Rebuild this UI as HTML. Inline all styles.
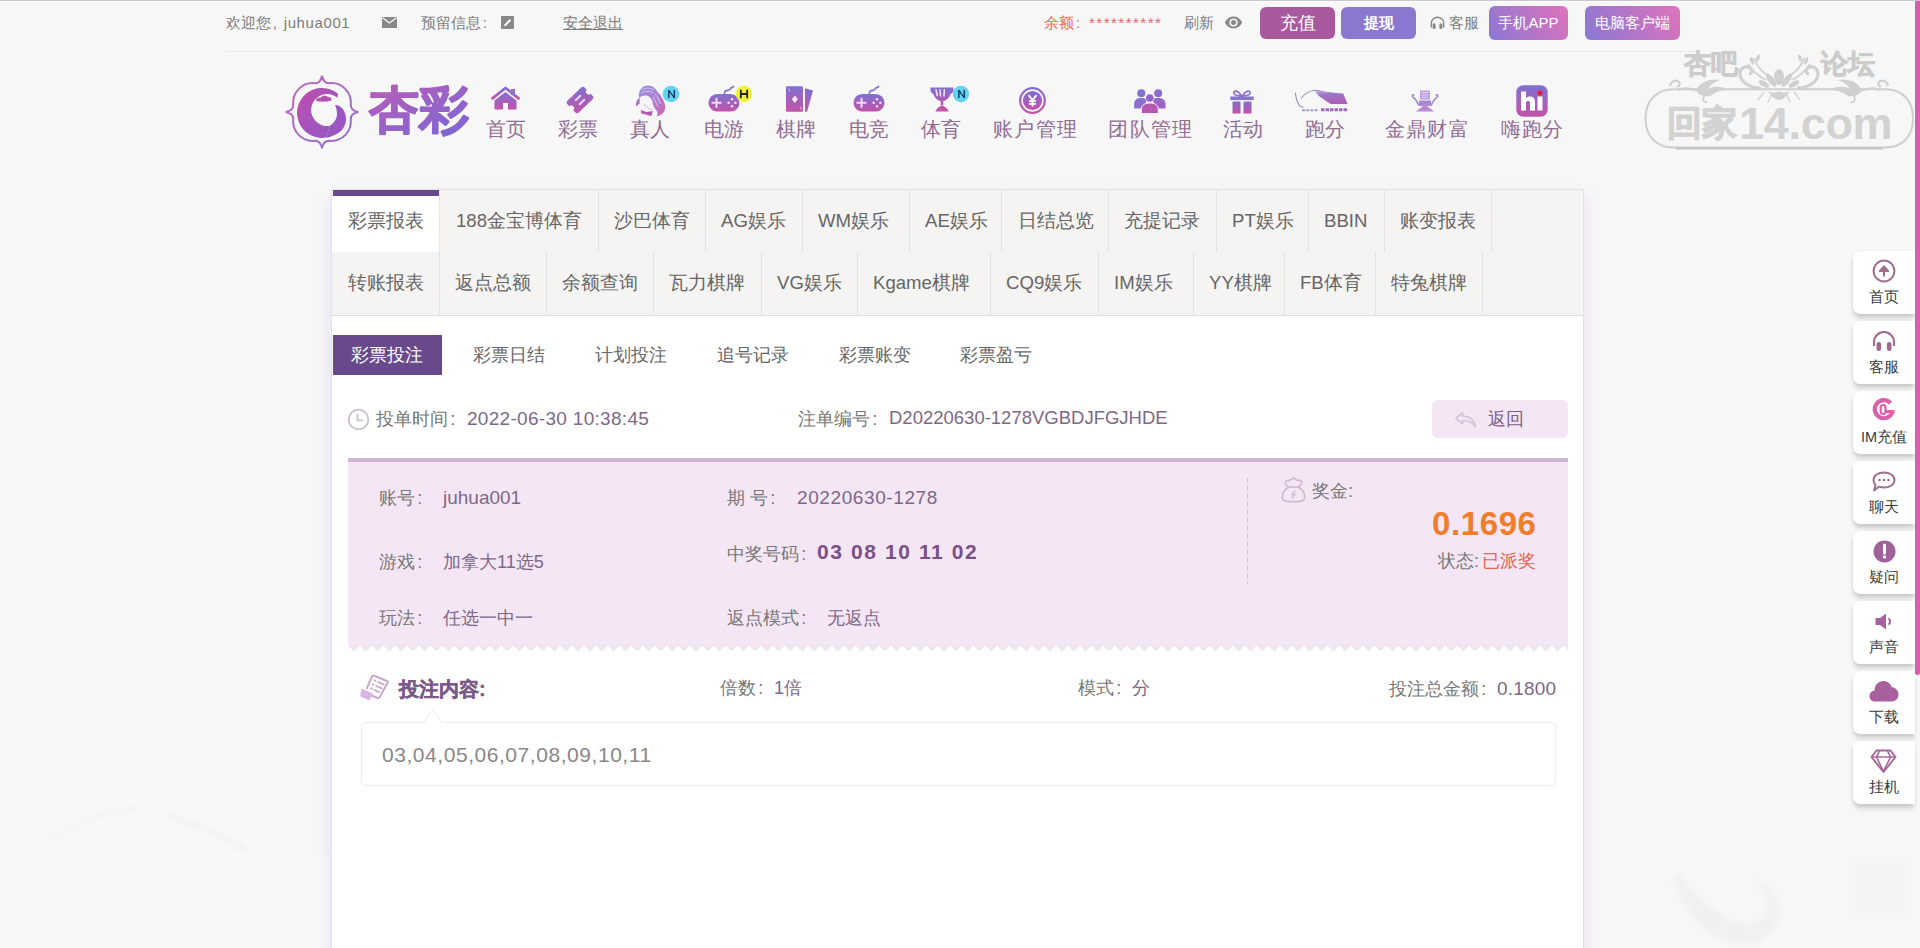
<!DOCTYPE html>
<html><head><meta charset="utf-8">
<style>
*{margin:0;padding:0;box-sizing:border-box}
html,body{width:1920px;height:948px;overflow:hidden}
body{background:#f7f7f7;font-family:"Liberation Sans",sans-serif;position:relative;color:#666}
.a{position:absolute}
.t{position:absolute;white-space:nowrap;line-height:1}
.c{font-style:normal;display:inline-block;width:1em;text-indent:0.12em}
/* top bar */
#topline{left:0;top:0;width:1920px;height:1px;background:#cac8cf;box-shadow:0 1px 0 #fbfbfd}
#hdrline{left:225px;top:51px;width:1470px;height:1px;background:#ebebeb}
.tb{font-size:15px;color:#7c7c7c}
.btn{position:absolute;border-radius:6px;color:#fff;text-align:center}
/* nav */
.nv{font-size:20px;color:#906c93;transform:translateX(-50%)}
/* tabs */
#box{left:331px;top:189px;width:1253px;height:780px;background:#fff;border:1px solid #e2e2e2;box-shadow:0 8px 14px rgba(200,170,230,.35)}
.row{position:absolute;left:332px;width:1251px;background:#f5f4f3}
.sep{position:absolute;width:1px;background:#e4e2e2}
.tab{font-size:18.6px;color:#666}
.sub{font-size:18px;color:#666}
.lbl{font-size:18px;color:#777}
.val{font-size:18px;color:#7d6888}
/* sidebar */
.card{position:absolute;left:1853px;width:62px;height:63px;background:#fff;border-radius:7px 0 0 7px;box-shadow:0 5px 5px -1px rgba(0,0,0,.17),-1px 1px 4px rgba(0,0,0,.05)}
.ct{position:absolute;left:0;width:62px;text-align:center;font-size:14.5px;color:#3a3a3a;top:39px;line-height:1}
.ci{position:absolute;left:20px;top:8px;width:22px;height:22px}
</style></head><body>
<!-- faint bg shapes -->
<svg class="a" style="left:0;top:560px;filter:blur(2.5px)" width="330" height="388" viewBox="0 0 330 388"><path d="M0 388V300C30 260 80 240 140 235C200 232 250 250 300 290L330 300V388Z" fill="#f8f8f8"/><path d="M50 280C80 260 110 250 140 248" stroke="#f3f3f3" stroke-width="4" fill="none"/><path d="M165 255C190 262 215 272 245 290" stroke="#f3f3f3" stroke-width="7" fill="none"/></svg>
<svg class="a" style="left:1660px;top:860px;filter:blur(2.5px)" width="260" height="88" viewBox="0 0 260 88"><path d="M18 12C30 30 50 50 75 62C95 70 110 60 108 42C106 30 98 25 92 22C102 20 116 30 118 48C120 72 100 88 70 82C45 76 25 50 14 22Z" fill="#f0f0f0"/><rect x="196" y="-30" width="50" height="85" fill="#f4f4f4"/></svg>
<div class="a" id="topline"></div>
<div class="a" id="hdrline"></div>

<!-- top bar left -->
<div class="t tb" style="left:226px;top:15px">欢迎您<i class="c" style="width:0.85em">,</i><span style="letter-spacing:0.6px">juhua001</span></div>
<div class="t tb" style="left:421px;top:15px">预留信息<i class="c">:</i></div>
<div class="t tb" style="left:563px;top:15px;text-decoration:underline">安全退出</div>
<!-- top bar right -->
<div class="t tb" style="left:1044px;top:15px;color:#ec6a45">余额<i class="c">:</i></div>
<div class="t tb" style="left:1089px;top:15px;color:#ec6070;letter-spacing:1.5px;font-size:15px">**********</div>
<div class="t tb" style="left:1184px;top:15px">刷新</div>
<div class="btn" style="left:1260px;top:7px;width:75px;height:32px;background:#a8589c;font-size:18px;line-height:32px">充值</div>
<div class="btn" style="left:1341px;top:7px;width:75px;height:32px;background:#8a77d0;font-size:15px;font-weight:bold;line-height:32px">提现</div>
<div class="t tb" style="left:1449px;top:15px;font-size:15px">客服</div>
<div class="btn" style="left:1489px;top:6px;width:79px;height:34px;background:linear-gradient(60deg,#8a78d4,#e072bc);font-size:15px;line-height:34px">手机APP</div>
<div class="btn" style="left:1585px;top:6px;width:95px;height:34px;background:linear-gradient(60deg,#8a78d4,#e072bc);font-size:15px;line-height:34px">电脑客户端</div>

<!-- nav -->
<div class="t nv" style="left:505.6px;top:119px">首页</div>
<div class="t nv" style="left:578.4px;top:119px">彩票</div>
<div class="t nv" style="left:650px;top:119px">真人</div>
<div class="t nv" style="left:723.8px;top:119px">电游</div>
<div class="t nv" style="left:795.5px;top:119px">棋牌</div>
<div class="t nv" style="left:868.5px;top:119px">电竞</div>
<div class="t nv" style="left:940.5px;top:119px">体育</div>
<div class="t nv" style="left:1035px;top:119px;letter-spacing:1.3px;margin-left:0.65px">账户管理</div>
<div class="t nv" style="left:1150.3px;top:119px;letter-spacing:1.3px;margin-left:0.65px">团队管理</div>
<div class="t nv" style="left:1243.2px;top:119px">活动</div>
<div class="t nv" style="left:1325px;top:119px">跑分</div>
<div class="t nv" style="left:1426.8px;top:119px;letter-spacing:1.3px;margin-left:0.65px">金鼎财富</div>
<div class="t nv" style="left:1531.5px;top:119px;letter-spacing:1px;margin-left:0.5px">嗨跑分</div>

<!-- main box -->
<div class="a" id="box"></div>
<div class="row" style="top:190px;height:62px"></div>
<div class="row" style="top:252px;height:63px"></div>
<div class="a" style="left:332px;top:315px;width:1251px;height:1px;background:#dcdcdc"></div>
<div class="a" style="left:332px;top:196px;width:107px;height:56px;background:#fff"></div>
<div class="a" style="left:333px;top:190px;width:106px;height:6px;background:#684a8c"></div>


<!-- tabs row1 -->
<div class="t tab" style="left:348px;top:212px">彩票报表</div>
<div class="t tab" style="left:456px;top:212px">188金宝博体育</div>
<div class="t tab" style="left:614px;top:212px">沙巴体育</div>
<div class="t tab" style="left:721px;top:212px">AG娱乐</div>
<div class="t tab" style="left:818px;top:212px">WM娱乐</div>
<div class="t tab" style="left:925px;top:212px">AE娱乐</div>
<div class="t tab" style="left:1018px;top:212px">日结总览</div>
<div class="t tab" style="left:1124px;top:212px">充提记录</div>
<div class="t tab" style="left:1232px;top:212px">PT娱乐</div>
<div class="t tab" style="left:1324px;top:212px">BBIN</div>
<div class="t tab" style="left:1400px;top:212px">账变报表</div>
<div class="sep" style="left:439px;top:190px;height:62px"></div>
<div class="sep" style="left:598px;top:190px;height:62px"></div>
<div class="sep" style="left:705px;top:190px;height:62px"></div>
<div class="sep" style="left:802px;top:190px;height:62px"></div>
<div class="sep" style="left:909px;top:190px;height:62px"></div>
<div class="sep" style="left:1001px;top:190px;height:62px"></div>
<div class="sep" style="left:1108px;top:190px;height:62px"></div>
<div class="sep" style="left:1216px;top:190px;height:62px"></div>
<div class="sep" style="left:1308px;top:190px;height:62px"></div>
<div class="sep" style="left:1384px;top:190px;height:62px"></div>
<div class="sep" style="left:1491px;top:190px;height:62px"></div>
<!-- tabs row2 -->
<div class="t tab" style="left:348px;top:274px">转账报表</div>
<div class="t tab" style="left:455px;top:274px">返点总额</div>
<div class="t tab" style="left:562px;top:274px">余额查询</div>
<div class="t tab" style="left:669px;top:274px">瓦力棋牌</div>
<div class="t tab" style="left:777px;top:274px">VG娱乐</div>
<div class="t tab" style="left:873px;top:274px">Kgame棋牌</div>
<div class="t tab" style="left:1006px;top:274px">CQ9娱乐</div>
<div class="t tab" style="left:1114px;top:274px">IM娱乐</div>
<div class="t tab" style="left:1209px;top:274px">YY棋牌</div>
<div class="t tab" style="left:1300px;top:274px">FB体育</div>
<div class="t tab" style="left:1391px;top:274px">特兔棋牌</div>
<div class="sep" style="left:439px;top:252px;height:63px"></div>
<div class="sep" style="left:546px;top:252px;height:63px"></div>
<div class="sep" style="left:653px;top:252px;height:63px"></div>
<div class="sep" style="left:761px;top:252px;height:63px"></div>
<div class="sep" style="left:857px;top:252px;height:63px"></div>
<div class="sep" style="left:990px;top:252px;height:63px"></div>
<div class="sep" style="left:1098px;top:252px;height:63px"></div>
<div class="sep" style="left:1193px;top:252px;height:63px"></div>
<div class="sep" style="left:1284px;top:252px;height:63px"></div>
<div class="sep" style="left:1375px;top:252px;height:63px"></div>
<div class="sep" style="left:1482px;top:252px;height:63px"></div>

<!-- sub tabs -->
<div class="a" style="left:333px;top:335px;width:109px;height:40px;background:#684a8c"></div>
<div class="t sub" style="left:351px;top:346px;color:#fff">彩票投注</div>
<div class="t sub" style="left:473px;top:346px">彩票日结</div>
<div class="t sub" style="left:594.5px;top:346px">计划投注</div>
<div class="t sub" style="left:717px;top:346px">追号记录</div>
<div class="t sub" style="left:838.5px;top:346px">彩票账变</div>
<div class="t sub" style="left:960px;top:346px">彩票盈亏</div>

<!-- order line -->
<div class="t lbl" style="left:376px;top:410px">投单时间<i class="c">:</i></div>
<div class="t val" style="left:467px;top:409px;font-size:19px;letter-spacing:0.3px">2022-06-30 10:38:45</div>
<div class="t lbl" style="left:798px;top:410px">注单编号<i class="c">:</i></div>
<div class="t val" style="left:889px;top:409px;font-size:18.5px">D20220630-1278VGBDJFGJHDE</div>
<div class="a" style="left:1432px;top:400px;width:136px;height:38px;border-radius:6px;background:#f5e6f6"></div>
<div class="t val" style="left:1488px;top:410px;color:#7a5e86">返回</div>

<!-- ticket -->
<div class="a" style="left:348px;top:458px;width:1220px;height:4px;background:#cbb6cf"></div>
<div class="a" style="left:348px;top:462px;width:1220px;height:184px;background:#f5e6f6"></div>
<div class="t lbl" style="left:379px;top:489px">账号<i class="c">:</i></div>
<div class="t val" style="left:443px;top:488px;font-size:19px">juhua001</div>
<div class="t lbl" style="left:379px;top:553px">游戏<i class="c">:</i></div>
<div class="t val" style="left:443px;top:553px">加拿大11选5</div>
<div class="t lbl" style="left:379px;top:609px">玩法<i class="c">:</i></div>
<div class="t val" style="left:443px;top:609px">任选一中一</div>
<div class="t lbl" style="left:727px;top:489px">期 号<i class="c">:</i></div>
<div class="t val" style="left:797px;top:488px;font-size:19px;letter-spacing:0.6px">20220630-1278</div>
<div class="t lbl" style="left:727px;top:545px">中奖号码<i class="c">:</i></div>
<div class="t" style="left:817px;top:541px;font-size:21px;font-weight:bold;color:#7a5088;letter-spacing:1.6px">03 08 10 11 02</div>
<div class="t lbl" style="left:727px;top:609px">返点模式<i class="c">:</i></div>
<div class="t val" style="left:827px;top:609px">无返点</div>
<svg class="a" style="left:1247px;top:478px" width="2" height="106"><path d="M0.5 0V106" stroke="#d4c2d6" stroke-width="1" stroke-dasharray="5 3"/></svg>
<div class="t lbl" style="left:1312px;top:482px">奖金:</div>
<div class="t" style="left:1432px;top:507px;font-size:33px;font-weight:bold;color:#f07d2a;letter-spacing:0.6px">0.1696</div>
<div class="t lbl" style="left:1438px;top:552px">状态:<span style="color:#e8654a;margin-left:3px">已派奖</span></div>

<!-- bet content -->
<div class="t" style="left:399px;top:679px;font-size:20px;font-weight:bold;color:#7a5a88;-webkit-text-stroke:0.4px #7a5a88">投注内容:</div>
<div class="t lbl" style="left:720px;top:679px">倍数<i class="c">:</i><span class="val" style="font-size:18px">1倍</span></div>
<div class="t lbl" style="left:1078px;top:679px">模式<i class="c">:</i><span class="val" style="font-size:18px">分</span></div>
<div class="t lbl" style="left:1389px;top:679px">投注总金额<i class="c">:</i><span class="val" style="font-size:19px;letter-spacing:0.2px">0.1800</span></div>
<div class="a" style="left:361px;top:722px;width:1195px;height:64px;border:1px solid #ececec;border-radius:5px;background:#fff"></div>
<div class="t" style="left:382px;top:744px;font-size:21px;color:#888;letter-spacing:0.55px">03,04,05,06,07,08,09,10,11</div>

<!-- sidebar -->
<div class="card" style="top:251px"><div class="ct">首页</div></div>
<div class="card" style="top:321px"><div class="ct">客服</div></div>
<div class="card" style="top:391px"><div class="ct">IM充值</div></div>
<div class="card" style="top:461px"><div class="ct">聊天</div></div>
<div class="card" style="top:531px"><div class="ct">疑问</div></div>
<div class="card" style="top:601px"><div class="ct">声音</div></div>
<div class="card" style="top:671px"><div class="ct">下载</div></div>
<div class="card" style="top:741px"><div class="ct">挂机</div></div>
<div class="a" style="left:1915px;top:1px;width:5px;height:674px;background:#d85fae;border-radius:0 0 2px 2px"></div>


<!-- top icons -->
<svg class="a" style="left:382px;top:17px" width="15" height="11" viewBox="0 0 15 11"><path d="M0 0H15V11H0Z" fill="#888"/><path d="M0.5 0.8L7.5 6L14.5 0.8" stroke="#f7f7f7" stroke-width="1.3" fill="none"/></svg>
<svg class="a" style="left:501px;top:16px" width="13" height="13" viewBox="0 0 13 13"><rect width="13" height="13" rx="1" fill="#888"/><path d="M3.2 10.2L3.6 8.3L8.8 3.1L10.2 4.5L5 9.7Z" fill="#fff"/></svg>
<svg class="a" style="left:1224px;top:16px" width="19" height="13" viewBox="0 0 19 13"><path d="M0.8 6.5C3.5 1.8 6.5 0.6 9.5 0.6S15.5 1.8 18.2 6.5C15.5 11.2 12.5 12.4 9.5 12.4S3.5 11.2 0.8 6.5Z" fill="#888"/><circle cx="9.5" cy="6.5" r="4.1" fill="#f7f7f7"/><circle cx="9.5" cy="6.5" r="2.5" fill="#888"/></svg>
<svg class="a" style="left:1430px;top:16px" width="15" height="13" viewBox="0 0 15 13"><path d="M1.3 11.5V7.5A6.2 6.2 0 0 1 13.7 7.5V11.5" stroke="#888" stroke-width="1.4" fill="none"/><rect x="2.6" y="7.3" width="3" height="5.7" rx="1.5" fill="#888"/><rect x="9.4" y="7.3" width="3" height="5.7" rx="1.5" fill="#888"/></svg>


<!-- nav icons -->
<svg width="0" height="0" style="position:absolute"><defs>
<linearGradient id="g1" x1="0" y1="0" x2="0" y2="1"><stop offset="0" stop-color="#7f70d2"/><stop offset="1" stop-color="#c452a8"/></linearGradient>
<linearGradient id="g2" x1="0" y1="0" x2="1" y2="1"><stop offset="0" stop-color="#8470d0"/><stop offset="1" stop-color="#c452a8"/></linearGradient>
<linearGradient id="g4" x1="1" y1="0" x2="0" y2="1"><stop offset="0" stop-color="#7f70d2"/><stop offset="1" stop-color="#c452a8"/></linearGradient>
<linearGradient id="g3" x1="0" y1="0" x2="0" y2="1"><stop offset="0" stop-color="#9a86d8"/><stop offset="1" stop-color="#c890c8"/></linearGradient>
<linearGradient id="glogo" x1="0" y1="0" x2="1" y2="1"><stop offset="0" stop-color="#c055ae"/><stop offset="1" stop-color="#7a68d4"/></linearGradient>
<linearGradient id="gscroll" x1="0" y1="0" x2="0" y2="1"><stop offset="0" stop-color="#d862ac"/><stop offset="1" stop-color="#d65cb0"/></linearGradient>
</defs></svg>
<!-- home -->
<svg class="a" style="left:491px;top:86px" width="29" height="24" viewBox="0 0 29 24"><path d="M1.5 12.3L14.5 2L27.5 12.3" stroke="url(#g1)" stroke-width="2.8" stroke-linecap="round" stroke-linejoin="round" fill="none"/><rect x="20" y="3" width="4" height="6" fill="#8872cc"/><path d="M3.5 14.5L14.5 6L25.5 14.5V23.6H17V17H12V23.6H3.5Z" fill="url(#g1)"/></svg>
<!-- ticket -->
<svg class="a" style="left:566px;top:86px" width="28" height="28" viewBox="0 0 28 28"><g transform="rotate(-44 14 14)"><rect x="2" y="5.8" width="24" height="16.4" rx="2.8" fill="url(#g4)"/><circle cx="2" cy="14" r="2.8" fill="#f7f7f7"/><circle cx="26" cy="14" r="2.8" fill="#f7f7f7"/><path d="M10.8 11.2H17.2M10.8 16.8H17.2" stroke="#f3d8ff" stroke-width="1.9" stroke-linecap="round"/></g></svg>
<!-- woman -->
<svg class="a" style="left:634px;top:84px" width="33" height="34" viewBox="0 0 33 34"><defs><linearGradient id="gwm" x1="0" y1="0" x2="0.8" y2="1"><stop offset="0" stop-color="#968ce0"/><stop offset="0.5" stop-color="#ac84d6"/><stop offset="1" stop-color="#c866b6"/></linearGradient></defs>
<path d="M4.7 12C5 5 9 1.4 14 1.4C19 1.4 22 5 24 8.5C27 11 29 15 30.5 19C32 23 31 27 29 29C27 31 25 32 22.6 32.5C24 30 24 28 22.5 26.5C20 24 19 21 18.5 18C17.5 14 15 11.5 11 11.5C8.5 11.5 6.5 12.5 5.5 14Z" fill="url(#gwm)"/>
<path d="M8 6C11 3.5 16 3.5 20 6M7 9.5C10 7 15 6.5 19.5 9M21 10C24 13 25 17 27 20M19.5 13C21 16 22 20 24.5 23" stroke="#d6ccf6" stroke-width="0.9" fill="none"/>
<path d="M5.5 13.5C3 15 1.5 18 2 22.5C3 21.5 4.2 20.5 5.8 19.5Z" fill="#a274c8"/>
<path d="M10 20C12 23 15 25 19 25.5" stroke="#d4bce0" stroke-width="1" fill="none"/>
<path d="M6.6 26L12.5 28L18.8 27L17.3 32.2L12 30.5L7.4 29.5Z" fill="#b458b0"/></svg>
<svg class="a" style="left:662px;top:85px" width="18" height="18" viewBox="0 0 18 18"><circle cx="9" cy="9" r="8.3" fill="#62d4f2"/><path d="M6.2 13V5H7.4L11.6 11V5H12.9V13H11.7L7.5 7V13Z" fill="#0b2850"/></svg>
<!-- gamepad 1 -->
<svg class="a" style="left:708px;top:85px" width="32" height="27" viewBox="0 0 32 27"><path d="M16.5 9C16 6.5 17.5 5.5 19.5 5.5C21.5 5.5 22 4 23 3C24 2 25 2.5 25.5 1.5" stroke="#8878cc" stroke-width="1.8" fill="none" stroke-linecap="round"/><rect x="0.5" y="9" width="31" height="17.6" rx="8.8" fill="url(#g1)"/><path d="M8.5 13.5V22M4.3 17.7H12.7" stroke="#f4dcff" stroke-width="2" stroke-linecap="round"/><circle cx="24" cy="14.3" r="1.3" fill="#f4dcff"/><circle cx="24" cy="21.2" r="1.3" fill="#f4dcff"/><circle cx="20.6" cy="17.7" r="1.3" fill="#f4dcff"/><circle cx="27.4" cy="17.7" r="1.3" fill="#f4dcff"/></svg>
<svg class="a" style="left:735px;top:85px" width="18" height="18" viewBox="0 0 18 18"><circle cx="9" cy="9" r="8.2" fill="#f2f23a"/><path d="M5.8 4.8V13.2M12.2 4.8V13.2M5.8 9H12.2" stroke="#222" stroke-width="1.8"/></svg>
<!-- cards -->
<svg class="a" style="left:786px;top:86px" width="28" height="26" viewBox="0 0 28 26"><rect x="0" y="0.3" width="17" height="25.4" rx="1" fill="url(#g1)"/><path d="M19 2.2L27 4.5L21 25.7H19Z" fill="url(#g1)"/><path d="M8.8 9.5L11.8 13.3L8.8 17.1L5.8 13.3Z" fill="#fbe8ff"/><path d="M2.5 2.5L4 5.5M14 20.5L15.2 23.5" stroke="#d8b8ee" stroke-width="1"/></svg>
<!-- gamepad 2 -->
<svg class="a" style="left:853px;top:85px" width="32" height="27" viewBox="0 0 32 27"><path d="M16.5 9C16 6.5 17.5 5.5 19.5 5.5C21.5 5.5 22 4 23 3C24 2 25 2.5 25.5 1.5" stroke="#8878cc" stroke-width="1.8" fill="none" stroke-linecap="round"/><rect x="0.5" y="9" width="31" height="17.6" rx="8.8" fill="url(#g1)"/><path d="M8.5 13.5V22M4.3 17.7H12.7" stroke="#f4dcff" stroke-width="2" stroke-linecap="round"/><circle cx="24" cy="14.3" r="1.3" fill="#f4dcff"/><circle cx="24" cy="21.2" r="1.3" fill="#f4dcff"/><circle cx="20.6" cy="17.7" r="1.3" fill="#f4dcff"/><circle cx="27.4" cy="17.7" r="1.3" fill="#f4dcff"/></svg>
<!-- trophy -->
<svg class="a" style="left:930px;top:86px" width="24" height="26" viewBox="0 0 24 26"><path d="M0.5 1.5H23.5V4C23.5 6 22 7.5 20.5 8C19.5 12 16.5 14.5 13.3 15V19.5H10.7V15C7.5 14.5 4.5 12 3.5 8C2 7.5 0.5 6 0.5 4Z" fill="url(#g1)"/><path d="M6 3.8L7.3 9.5M10 3.8L10.5 10M14.3 3.8L14 10" stroke="#f0e4ff" stroke-width="1.5" stroke-linecap="round"/><path d="M5.5 25.5C7 21.5 10 20 12 20S17 21.5 18.5 25.5Z" fill="#c052a8"/></svg>
<svg class="a" style="left:952px;top:85px" width="18" height="18" viewBox="0 0 18 18"><circle cx="9" cy="9" r="8.2" fill="#62d4f2"/><path d="M6.2 13V5H7.4L11.6 11V5H12.9V13H11.7L7.5 7V13Z" fill="#0b2850"/></svg>
<!-- yen -->
<svg class="a" style="left:1019px;top:86.5px" width="27" height="27" viewBox="0 0 27 27"><circle cx="13.5" cy="13.5" r="12.3" fill="none" stroke="url(#g1)" stroke-width="2.2"/><circle cx="13.5" cy="13.5" r="9.6" fill="url(#g1)"/><path d="M9.5 8.2L13.5 13L17.5 8.2M13.5 13V19.5M10 14.2H17M10 16.8H17" stroke="#fff" stroke-width="1.8" fill="none"/></svg>
<!-- team -->
<svg class="a" style="left:1134px;top:89px" width="32" height="25" viewBox="0 0 32 25"><circle cx="7.3" cy="4.3" r="4" fill="#7f70d2"/><path d="M0.2 19.5V14.5C0.2 11 3 9 7.3 9S12 10 13 11L9 19.5Z" fill="#8a6ed0"/><circle cx="24.2" cy="4.3" r="4" fill="#8a6ed0"/><path d="M31.5 19.5V14.5C31.5 11 28.5 9 24.2 9S19.5 10 18.5 11L22.5 19.5Z" fill="#9a64c8"/><circle cx="15.8" cy="9" r="4.5" fill="#f7f7f7"/><circle cx="15.8" cy="9" r="3.8" fill="#9064cc"/><path d="M7.3 24.6V20.5C7.3 16 11 14 15.8 14S24.3 16 24.3 20.5V24.6Z" fill="#b658b0" stroke="#f7f7f7" stroke-width="1"/></svg>
<!-- gift -->
<svg class="a" style="left:1229.5px;top:89px" width="24" height="25" viewBox="0 0 24 25"><path d="M11.5 7C8 1 3 1 4 4.5C5 7 9 7 11.5 7ZM12.5 7C16 1 21 1 20 4.5C19 7 15 7 12.5 7Z" fill="none" stroke="#8a74d0" stroke-width="1.8"/><rect x="0.3" y="7.5" width="23.4" height="3.6" fill="#8a74d0"/><rect x="2.5" y="12.5" width="8" height="12" fill="url(#g1)"/><rect x="13.5" y="12.5" width="8" height="12" fill="url(#g1)"/></svg>
<!-- rhino -->
<svg class="a" style="left:1294px;top:88px" width="56" height="24" viewBox="0 0 56 24"><defs><linearGradient id="grh" x1="0" y1="0" x2="0.3" y2="1"><stop offset="0" stop-color="#d4c8ee"/><stop offset="0.35" stop-color="#9a76cc"/><stop offset="1" stop-color="#b060b8"/></linearGradient></defs>
<path d="M20.6 2.5C30 3 40 5 49.3 5.5L53.5 16H37C33 14.5 30 11 27 9.5C24.5 8 22.5 5.5 20.6 2.5Z" fill="url(#grh)"/>
<path d="M1.2 4.7C2 10 3.5 15 6 18.5L9.6 19.3M7 10.5C10 6.5 15 3 20.6 2.3C24 2.5 27 3.5 30 4" stroke="#9a90bc" stroke-width="1.1" fill="none"/>
<path d="M8 22.3H24" stroke="#a898c8" stroke-width="2" stroke-dasharray="3 1.2"/><path d="M27 21.8H53.5" stroke="#a068c0" stroke-width="3" stroke-dasharray="3.5 1"/></svg>
<!-- ding -->
<svg class="a" style="left:1411px;top:90px" width="28" height="22" viewBox="0 0 28 22"><path d="M3.5 5C1 4 0.5 7 3 8C5 9 6 13 8 15H20C22 13 23 9 25 8C27.5 7 27 4 24.5 5" stroke="#a890d0" stroke-width="1.8" fill="none"/><rect x="9" y="0.5" width="10" height="9" fill="#b8a0dc"/><path d="M10.5 2.5H17.5M10.5 5H17.5M10.5 7.3H17.5" stroke="#e8d8f4" stroke-width="0.9"/><rect x="8" y="10.5" width="12" height="4.5" fill="#a888d0"/><path d="M5 21.5L12 16H16L23 21.5Z" fill="#b888d0"/></svg>
<!-- hi -->
<svg class="a" style="left:1516px;top:84.5px" width="32" height="32" viewBox="0 0 32 32"><rect x="0.3" y="0.3" width="31.4" height="31.4" rx="7" fill="url(#g1)"/><path d="M5 6.5H10V13C11 12 12.5 11.5 14 11.5C17 11.5 19 13.5 19 16.5V25.5H14V17.5C14 16.5 13 16 12 16S10 16.5 10 17.5V25.5H5Z" fill="#fff"/><rect x="21.5" y="11.5" width="5" height="14" fill="#fff"/><circle cx="24" cy="8" r="2.4" fill="#e82020"/></svg>


<!-- logo -->
<svg class="a" style="left:284.5px;top:75px" width="74" height="74" viewBox="0 0 74 74">
<defs><linearGradient id="glo" x1="0" y1="0" x2="1" y2="1"><stop offset="0" stop-color="#c266ba"/><stop offset="1" stop-color="#8c70d0"/></linearGradient>
<linearGradient id="glc" x1="0" y1="0" x2="1" y2="1"><stop offset="0" stop-color="#c24cae"/><stop offset="1" stop-color="#8e5ac8"/></linearGradient></defs>
<path d="M37.0 0.7Q38.5 8.7 44.7 8.2A19.5 19.5 0 0 1 65.8 29.3Q65.3 35.5 73.3 37.0Q65.3 38.5 65.8 44.7A19.5 19.5 0 0 1 44.7 65.8Q38.5 65.3 37.0 73.3Q35.5 65.3 29.3 65.8A19.5 19.5 0 0 1 8.2 44.7Q8.7 38.5 0.7 37.0Q8.7 35.5 8.2 29.3A19.5 19.5 0 0 1 29.3 8.2Q35.5 8.7 37.0 0.7Z" fill="none" stroke="url(#glo)" stroke-width="2"/>
<path d="M53.1 18.8A25 25 0 1 0 41.3 62.6L44.8 50.8A16 16 0 1 1 52.3 22.7Z" fill="url(#glc)"/>
<path d="M50 30C56 30 61 36 61 44C61 52 56 58 47 61C45 62 43 62.5 41.3 62.6L44.8 50.8C49 48 52 44 52 39C52 35 51 32 50 30Z" fill="#9c56c2"/>
<path d="M31 26C31 23 34 22 36 22.5C37 20.5 41 20 43 22C45 21.5 47 23 46.5 25.5C42 27 36 27 31 26Z" fill="#b452b6"/>
<path d="M26 60C30 58 34 57.5 38 58.5C36 61 31 62 26 60Z" fill="#a656c0"/>
</svg>
<svg class="a" style="left:362px;top:76px" width="115" height="66" viewBox="0 0 115 66"><defs><linearGradient id="gtx" x1="0" y1="0" x2="1" y2="1"><stop offset="0" stop-color="#bc5cb6"/><stop offset="1" stop-color="#7868d6"/></linearGradient></defs><text x="7" y="51" font-family="Liberation Sans, sans-serif" font-size="50" fill="url(#gtx)" stroke="url(#gtx)" stroke-width="3.2" stroke-linejoin="round" letter-spacing="0">杏彩</text></svg>


<!-- clock -->
<svg class="a" style="left:347px;top:408px" width="23" height="23" viewBox="0 0 23 23"><circle cx="11.5" cy="11.5" r="9.8" fill="none" stroke="#cdc3cf" stroke-width="1.8"/><path d="M10.5 6V12.3H16" stroke="#cdc3cf" stroke-width="1.8" fill="none"/></svg>
<!-- reply -->
<svg class="a" style="left:1454px;top:411px" width="23" height="17" viewBox="0 0 23 17"><path d="M8.5 1.5L1.8 7.3L8.5 13V9.5C13.5 9.3 18 10.5 21.2 15.8C20.5 9.8 16.5 5.3 8.5 5Z" fill="none" stroke="#d6c2d8" stroke-width="1.6" stroke-linejoin="round"/></svg>
<!-- money bag -->
<svg class="a" style="left:1281px;top:477px" width="25" height="26" viewBox="0 0 25 26"><path d="M8 10C5.5 9 3.5 6.5 4.5 4.5C6 2.5 8 4 9.5 3C11 1.5 12 1 12.5 1S14 1.5 15.5 3C17 4 19 2.5 20.5 4.5C21.5 6.5 19.5 9 17 10" fill="none" stroke="#cdb8d0" stroke-width="1.6"/><path d="M8 10C3 12 1.2 17 1.2 20C1.2 23.5 4 24.6 8 24.6H17C21 24.6 23.8 23.5 23.8 20C23.8 17 22 12 17 10Z" fill="none" stroke="#cdb8d0" stroke-width="1.6"/><path d="M14.5 13.5L11 17.5H14L10.5 21.5" fill="none" stroke="#d4c0d6" stroke-width="1.4"/></svg>
<!-- scroll icon -->
<svg class="a" style="left:359px;top:672px" width="31" height="30" viewBox="0 0 31 30"><path d="M7.5 17L13 4.5Q13.6 3.2 15 3.6L27.8 9Q29.2 9.7 28.5 11L20.6 25.2Q19.9 26.5 18.5 26L12.5 23.5" fill="#fff" stroke="#c8a8cc" stroke-width="2" stroke-linejoin="round"/><path d="M2.6 16.5L13.8 21.5L11.2 27.3Q10.6 28.6 9.3 28L2.2 24.9Q1 24.3 1.4 23.1Z" fill="#dab6e2"/><path d="M15.6 8.3L16.4 8.7M13.8 12.3L14.6 12.7M12 16.3L12.8 16.7M19 10L24.5 12.4M17.2 14L22.7 16.4M15.4 18L20.2 20.1" stroke="#c8a8cc" stroke-width="1.9" stroke-linecap="round"/></svg>
<!-- bet content notch -->
<svg class="a" style="left:424px;top:708px" width="18" height="15" viewBox="0 0 18 15"><path d="M0 14.5L9 1L18 14.5" fill="#fff" stroke="#ececec" stroke-width="1"/><rect x="1" y="14" width="16" height="2" fill="#fff"/></svg>
<!-- zigzag -->
<svg class="a" style="left:348px;top:645px" width="1220" height="8" viewBox="0 0 1220 8"><defs><pattern id="zz" x="0" y="0" width="11.8" height="8" patternUnits="userSpaceOnUse"><path d="M0 0H11.8V0.5L5.9 6.5L0 0.5Z" fill="#f2e3f3"/></pattern></defs><rect width="1220" height="8" fill="url(#zz)"/></svg>

<!-- sidebar icons -->
<svg class="a" style="left:1872px;top:259px" width="24" height="24" viewBox="0 0 24 24"><circle cx="12" cy="12" r="10.4" fill="none" stroke="#a06c90" stroke-width="2"/><path d="M12 17.5V8.5M7.8 12L12 7.5L16.2 12Z" stroke="#a06c90" stroke-width="2" fill="#a06c90" stroke-linejoin="round"/></svg>
<svg class="a" style="left:1872px;top:331px" width="24" height="21" viewBox="0 0 24 21"><path d="M2 15V11A10 10 0 0 1 22 11V15" fill="none" stroke="#a0688e" stroke-width="2"/><rect x="4.5" y="11" width="4.6" height="9" rx="2.3" fill="#a0688e"/><rect x="14.9" y="11" width="4.6" height="9" rx="2.3" fill="#a0688e"/></svg>
<svg class="a" style="left:1872px;top:398px" width="23" height="23" viewBox="0 0 23 23"><path d="M18.5 5.2A9 9 0 1 0 20.5 13.5" fill="none" stroke="#d862aa" stroke-width="4.2"/><rect x="8.7" y="7" width="4.8" height="9" rx="2.4" fill="none" stroke="#d862aa" stroke-width="2.2"/><path d="M13.5 13.5H22.5" stroke="#d862aa" stroke-width="3"/></svg>
<svg class="a" style="left:1872px;top:471px" width="24" height="21" viewBox="0 0 24 21"><path d="M12 1.5C17.5 1.5 22.5 4.5 22.5 9S17.5 16.5 12 16.5C10 16.5 8.5 16.2 7 15.6L2 19.5L3.5 14C2 12.5 1.5 10.8 1.5 9C1.5 4.5 6.5 1.5 12 1.5Z" fill="none" stroke="#a06c90" stroke-width="1.9" stroke-linejoin="round"/><circle cx="7.5" cy="9" r="1.3" fill="#a06c90"/><circle cx="12" cy="9" r="1.3" fill="#a06c90"/><circle cx="16.5" cy="9" r="1.3" fill="#a06c90"/></svg>
<svg class="a" style="left:1873px;top:540px" width="23" height="23" viewBox="0 0 23 23"><circle cx="11.5" cy="11.5" r="11" fill="#a0609a"/><path d="M11.5 5V13" stroke="#fff" stroke-width="3" stroke-linecap="round"/><circle cx="11.5" cy="17" r="1.7" fill="#fff"/></svg>
<svg class="a" style="left:1875px;top:613px" width="18" height="17" viewBox="0 0 18 17"><path d="M0.5 5H5L11 0.5V16.5L5 12H0.5Z" fill="#a8609e"/><path d="M13.5 5.5C15.5 6.5 15.5 10.5 13.5 11.5" stroke="#a8609e" stroke-width="2" fill="none"/></svg>
<svg class="a" style="left:1869px;top:680px" width="30" height="22" viewBox="0 0 30 22"><path d="M6 21.5C2.5 21.5 0.5 19 0.5 16C0.5 13 2.5 11 5.5 10.5C5.5 5 9.5 1 14.5 1C18.5 1 21.5 3.5 22.5 7C26.5 7.5 29.5 10.5 29.5 14.5C29.5 18.5 26.5 21.5 22.5 21.5Z" fill="#a8609e"/></svg>
<svg class="a" style="left:1870px;top:749px" width="27" height="25" viewBox="0 0 27 25"><path d="M6.5 1.5H20.5L25.5 8L13.5 23L1.5 8Z" fill="none" stroke="#a8689a" stroke-width="2" stroke-linejoin="round"/><path d="M1.5 8H25.5M9.5 1.8L6.5 8L13.5 22.5L20.5 8L17.5 1.8" fill="none" stroke="#a8689a" stroke-width="1.6"/></svg>


<!-- watermark -->
<svg class="a" style="left:1640px;top:44px" width="280" height="108" viewBox="0 0 280 108">
<g fill="#cccccc">
<text x="44" y="28.5" font-family="Liberation Sans, sans-serif" font-size="27" font-weight="bold" stroke="#cccccc" stroke-width="0.8">杏吧</text>
<text x="181" y="28.5" font-family="Liberation Sans, sans-serif" font-size="27" font-weight="bold" stroke="#cccccc" stroke-width="0.8">论坛</text>
<text x="26.5" y="90.5" font-family="Liberation Sans, sans-serif" font-size="35" font-weight="bold" stroke="#d2d2d2" stroke-width="1.2" fill="#d2d2d2">回家</text>
<text x="99" y="95" font-family="Liberation Sans, sans-serif" font-size="45" font-weight="bold" letter-spacing="-0.3" fill="#d2d2d2">14.com</text>
</g>
<path d="M34 45.3H245C262 45.3 273 56 273 74.5C273 93 262 103.5 245 103.5H34C17 103.5 5.5 93 5.5 74.5C5.5 56 17 45.3 34 45.3Z" fill="none" stroke="#cfcfcf" stroke-width="2"/>
<path d="M36 104.5H243" stroke="#c4c4c4" stroke-width="2.2"/>
<g fill="#d0d0d0" stroke="none">
<!-- left leaf scroll -->
<path d="M56 46C60 38 70 34 80 36C74 38 70 41 68 45C74 42 82 42 88 46C80 46 74 49 70 52C64 53 58 51 56 46Z"/>
<path d="M30 42C31 37 36 35 39 38C41 40 39 43 37 42" fill="none" stroke="#d0d0d0" stroke-width="2.2"/>
<path d="M38 46C42 44 48 44 56 46" fill="none" stroke="#d0d0d0" stroke-width="2.5"/>
<path d="M64 52C62 56 64 59 67 58" fill="none" stroke="#d0d0d0" stroke-width="1.8"/>
<!-- right leaf scroll -->
<path d="M222 46C218 38 208 34 198 36C204 38 208 41 210 45C204 42 196 42 190 46C198 46 204 49 208 52C214 53 220 51 222 46Z"/>
<path d="M248 42C247 37 242 35 239 38C237 40 239 43 241 42" fill="none" stroke="#d0d0d0" stroke-width="2.2"/>
<path d="M240 46C236 44 230 44 222 46" fill="none" stroke="#d0d0d0" stroke-width="2.5"/>
<path d="M214 52C216 56 214 59 211 58" fill="none" stroke="#d0d0d0" stroke-width="1.8"/>
<!-- center flourish -->
<path d="M121 44C110 44 100 38 100 30C100 24 106 21 110 24C113 26 112 30 109 30" fill="none" stroke="#d0d0d0" stroke-width="3"/>
<path d="M157 44C168 44 178 38 178 30C178 24 172 21 168 24C165 26 166 30 169 30" fill="none" stroke="#d0d0d0" stroke-width="3"/>
<path d="M108 20C112 26 118 32 126 36M170 20C166 26 160 32 152 36M114 14C116 20 120 26 126 30M164 14C162 20 158 26 152 30" fill="none" stroke="#d2d2d2" stroke-width="1.8"/>
<ellipse cx="112" cy="17" rx="1.8" ry="4" transform="rotate(-20 112 17)"/><ellipse cx="166" cy="17" rx="1.8" ry="4" transform="rotate(20 166 17)"/>
<ellipse cx="118" cy="14" rx="1.6" ry="3.5" transform="rotate(15 118 14)"/><ellipse cx="160" cy="14" rx="1.6" ry="3.5" transform="rotate(-15 160 14)"/>
<ellipse cx="139" cy="33" rx="5" ry="8"/>
<ellipse cx="131" cy="36" rx="3" ry="8" transform="rotate(-35 131 36)"/>
<ellipse cx="147" cy="36" rx="3" ry="8" transform="rotate(35 147 36)"/>
<ellipse cx="124" cy="40" rx="2.5" ry="6" transform="rotate(-60 124 40)"/>
<ellipse cx="154" cy="40" rx="2.5" ry="6" transform="rotate(60 154 40)"/>
<path d="M128 47C131 52 134 55 139 56C144 55 147 52 150 47C146 49 142 49 139 47.5C136 49 132 49 128 47Z"/>
<path d="M124 48L118 56M154 48L160 56M132 50L128 58M146 50L150 58" stroke="#d4d4d4" stroke-width="1.4"/>
</g>
</svg>

</body></html>
